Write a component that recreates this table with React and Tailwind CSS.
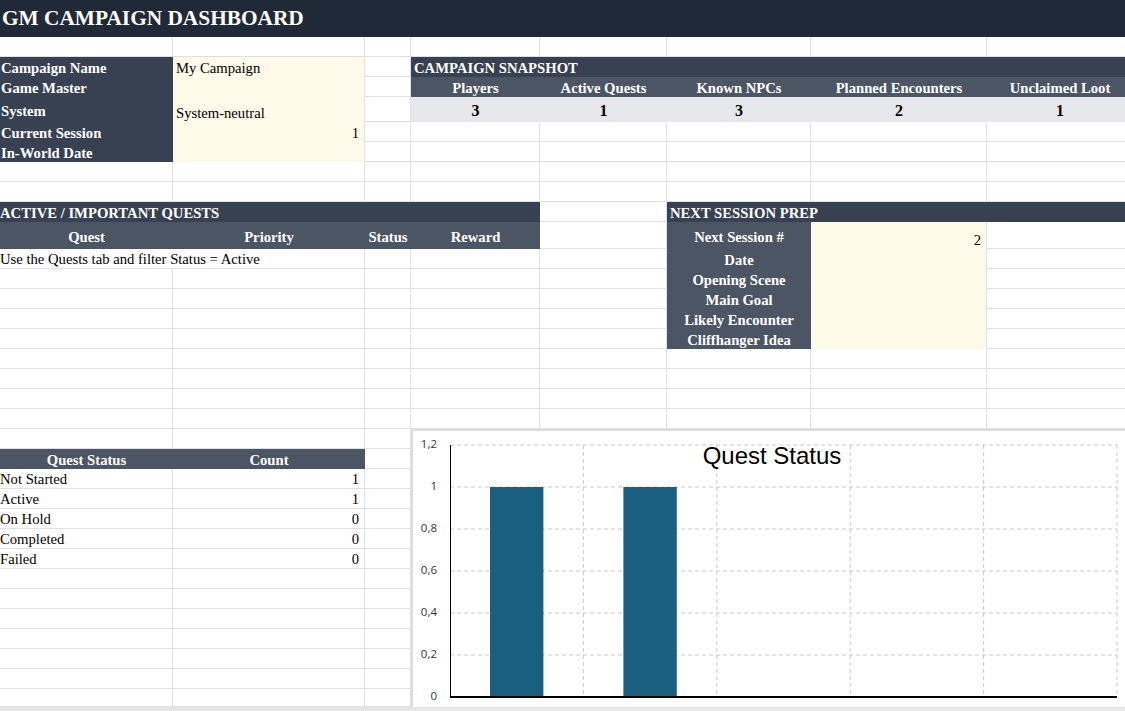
import React from 'react'

const line = 'border-r border-b border-[#e0e0e0]'
const darkLabel = 'flex items-end pl-px font-bold text-white bg-[#374151] leading-[18px]'
const cream = 'flex items-end bg-[#fefae9] border-r border-[#e0e0e0] leading-[18px]'
const grayHead = 'flex items-center justify-center pt-[2px] font-bold text-white bg-[#4b5563] leading-[18px]'
const textCell = 'flex items-end leading-[18px] ' + line

const snapshot = [
  ['Players', 3],
  ['Active Quests', 1],
  ['Known NPCs', 3],
  ['Planned Encounters', 2],
  ['Unclaimed Loot', 1],
]

const prep = ['Date', 'Opening Scene', 'Main Goal', 'Likely Encounter', 'Cliffhanger Idea']

const questStatus = [
  ['Not Started', 1],
  ['Active', 1],
  ['On Hold', 0],
  ['Completed', 0],
  ['Failed', 0],
]

function Blanks({ n }) {
  return Array.from({ length: n }, (_, i) => <div key={i} className={line} />)
}

function QuestChart() {
  const ticks = ['1,2', '1', '0,8', '0,6', '0,4', '0,2', '0']
  const cols = [37, 170.4, 303.8, 437.2, 570.6, 704]
  const values = [1, 1, 0, 0, 0]
  return (
    <svg width="722" height="276" className="block">
      {ticks.map((t, i) => (
        <g key={t}>
          {i < 6 && (
            <line x1="37" x2="704" y1={14 + i * 42} y2={14 + i * 42} stroke="#c9c9c9" strokeDasharray="4 3" />
          )}
          <text
            x="24"
            y={14 + i * 42}
            textAnchor="end"
            dominantBaseline="middle"
            fontSize="11.5"
            fontFamily="'Open Sans', sans-serif"
            fill="#333"
          >
            {t}
          </text>
        </g>
      ))}
      {cols.slice(1).map((x) => (
        <line key={x} x1={x} x2={x} y1="14" y2="266" stroke="#c9c9c9" strokeDasharray="4 3" />
      ))}
      {values.map((v, i) =>
        v > 0 ? (
          <rect key={i} x={cols[i] + 40} y={266 - v * 210} width="53.4" height={v * 210} fill="#185f80" />
        ) : null
      )}
      <line x1="37.5" x2="37.5" y1="14" y2="266" stroke="#000" strokeWidth="1" />
      <line x1="37" x2="704" y1="266" y2="266" stroke="#000" strokeWidth="2" />
      <text x="359" y="33" textAnchor="middle" fontSize="24" fontFamily="'Liberation Sans', Arial, sans-serif" fill="#000">
        Quest Status
      </text>
    </svg>
  )
}

export default function App() {
  return (
    <div className="w-[1125px] h-[711px] overflow-hidden bg-white [font-family:'Liberation_Serif',serif] text-[14.67px] text-black">
      <div className="grid w-[1133px] grid-cols-[173px_192px_46px_129px_127px_144px_176px_146px] grid-rows-[37px_20px_20px_20px_25px_20px_20px_20px_20px_20px_27px_repeat(22,20px)_18px]">
        {/* chart floats over D21:H34 */}
        <div className="col-start-4 col-end-9 row-start-21 row-end-35 border-t-2 border-l-2 border-[#dcdcdc] bg-white">
          <QuestChart />
        </div>

        {/* title */}
        <div className="col-span-8 flex items-center bg-[#1f2937] pl-[2px] text-[21.33px] font-bold text-white">
          GM CAMPAIGN DASHBOARD
        </div>

        <Blanks n={8} />

        {/* campaign info + snapshot */}
        <div className={darkLabel}>Campaign Name</div>
        <div className={cream + ' pl-[3px]'}>My Campaign</div>
        <div className={line} />
        <div className="col-span-5 flex items-end pl-[3px] bg-[#374151] font-bold text-white leading-[18px]">
          CAMPAIGN SNAPSHOT
        </div>

        <div className={darkLabel}>Game Master</div>
        <div className={cream} />
        <div className={line} />
        {snapshot.map(([h]) => (
          <div key={h} className={grayHead}>{h}</div>
        ))}

        <div className={darkLabel + ' pb-[2px]'}>System</div>
        <div className={cream + ' pl-[3px]'}>System-neutral</div>
        <div className={line} />
        {snapshot.map(([h, v]) => (
          <div key={h} className="flex items-center justify-center bg-[#e5e7eb] pt-[3px] text-[16px] font-bold">
            {v}
          </div>
        ))}

        <div className={darkLabel}>Current Session</div>
        <div className={cream + ' justify-end pr-[5px]'}>1</div>
        <div className={line} />
        <Blanks n={5} />

        <div className={darkLabel}>In-World Date</div>
        <div className={cream} />
        <div className={line} />
        <Blanks n={5} />

        <Blanks n={8} />
        <Blanks n={8} />

        {/* quests + next session prep */}
        <div className="col-span-4 flex items-end bg-[#374151] font-bold text-white leading-[18px]">
          ACTIVE / IMPORTANT QUESTS
        </div>
        <div className={line} />
        <div className="col-span-3 flex items-end pl-[3px] bg-[#374151] font-bold text-white leading-[18px]">
          NEXT SESSION PREP
        </div>

        {['Quest', 'Priority', 'Status', 'Reward'].map((h) => (
          <div key={h} className={grayHead}>{h}</div>
        ))}
        <div className={line} />
        <div className={grayHead}>Next Session #</div>
        <div className={cream + ' justify-end pr-[5px]'}>2</div>
        <div className={line} />

        {prep.map((p, i) => (
          <React.Fragment key={p}>
            {i === 0 ? (
              <div className={'col-span-2 ' + textCell}>Use the Quests tab and filter Status = Active</div>
            ) : (
              <Blanks n={2} />
            )}
            <Blanks n={3} />
            <div className={grayHead}>{p}</div>
            <div className={cream} />
            <div className={line} />
          </React.Fragment>
        ))}

        {[0, 1, 2, 3].map((r) => (
          <React.Fragment key={r}>
            <Blanks n={8} />
          </React.Fragment>
        ))}

        {/* quest status table, rows 21-34 */}
        <Blanks n={3} />

        <div className={grayHead}>Quest Status</div>
        <div className={grayHead}>Count</div>
        <div className={line} />

        {questStatus.map(([s, c]) => (
          <React.Fragment key={s}>
            <div className={textCell}>{s}</div>
            <div className={textCell + ' justify-end pr-[5px]'}>{c}</div>
            <div className={line} />
          </React.Fragment>
        ))}

        {[0, 1, 2, 3, 4, 5, 6].map((r) => (
          <React.Fragment key={r}>
            <Blanks n={3} />
          </React.Fragment>
        ))}
      </div>
      <div className="h-[4px] bg-[#e6e6e6]" />
    </div>
  )
}
